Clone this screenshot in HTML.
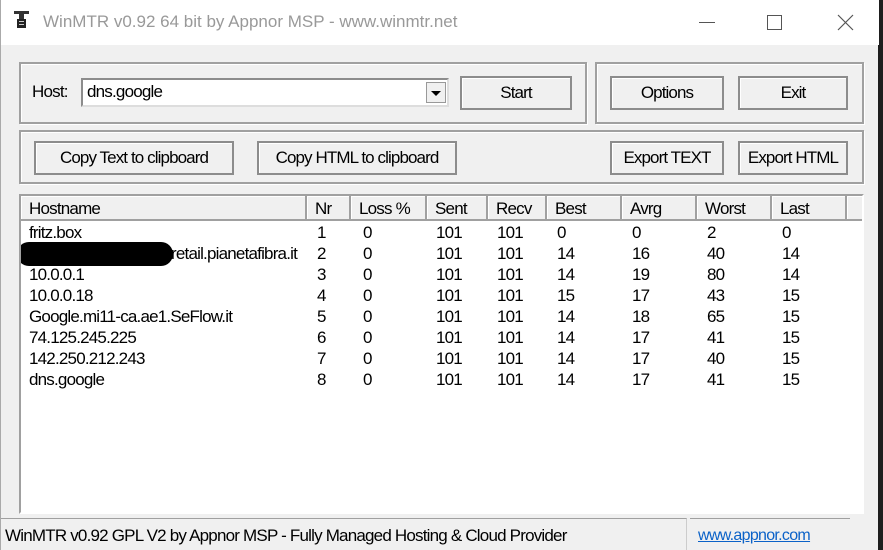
<!DOCTYPE html>
<html><head><meta charset="utf-8"><style>
*{margin:0;padding:0;box-sizing:border-box}
body{width:883px;height:550px;background:#1e1e1e;position:relative;overflow:hidden;font-family:"Liberation Sans",sans-serif;font-size:17px;color:#000}
.win{position:absolute;left:0;top:0;width:878px;height:550px;background:#f0f0f0;border-left:1px solid #aaa}
.title{position:absolute;left:0;top:0;width:878px;height:45px;background:#fff}
.title span{position:absolute;left:42px;top:12px;font-size:17px;color:#999}
.a{position:absolute}
.grp{position:absolute;border:2px solid #a0a0a0;box-shadow:inset 1px 1px 0 #fff,1px 1px 0 #fff}
.btn{position:absolute;border:2px solid #8c8c8c;background:#f0f0f0;text-align:center;font-size:17px;letter-spacing:-0.9px;box-shadow:inset 1px 1px 0 #fff}
.list{position:absolute;left:18px;top:194px;width:845px;height:320px;background:#fff;border:2px solid #a0a0a0;border-right-color:#fff;border-bottom-color:#fff;overflow:hidden}
.hd{position:absolute;top:0;height:25px;background:#f0f0f0;border-right:2px solid #a0a0a0;border-bottom:2px solid #a0a0a0;box-shadow:inset 1px 1px 0 #fff;padding-left:8px;line-height:25px;letter-spacing:-0.8px}
.c{position:absolute;letter-spacing:-0.8px;line-height:21px}
</style></head><body>
<div class="win">
<div class="title">
<svg class="a" style="left:13px;top:11px" width="16" height="18" viewBox="0 0 16 18"><rect x="0" y="0" width="15" height="3" fill="#333"/><rect x="5" y="3" width="5" height="5" fill="#333"/><rect x="3" y="8" width="9" height="9" fill="#222"/><rect x="5" y="10" width="5" height="1" fill="#ccc"/><rect x="5" y="13" width="5" height="1" fill="#ccc"/></svg>
<span>WinMTR v0.92 64 bit by Appnor MSP - www.winmtr.net</span>
<div class="a" style="left:698px;top:22px;width:16px;height:1px;background:#555"></div>
<div class="a" style="left:766px;top:15px;width:15px;height:15px;border:1px solid #555"></div>
<svg class="a" style="left:836px;top:14px" width="17" height="17"><path d="M1 1L16 16M16 1L1 16" stroke="#555" stroke-width="1.2"/></svg>
</div>

<div class="grp" style="left:18px;top:62px;width:568px;height:62px"></div>
<div class="grp" style="left:594px;top:62px;width:269px;height:62px"></div>
<div class="grp" style="left:18px;top:130px;width:845px;height:54px"></div>

<div class="a" style="left:31px;top:82px;letter-spacing:-0.8px">Host:</div>
<div class="a" style="left:80px;top:78px;width:368px;height:29px;background:#fff;border:2px solid #8c8c8c;border-right-color:#ddd;border-bottom-color:#ddd"><span class="a" style="left:4px;top:2px;letter-spacing:-0.8px">dns.google</span>
<div class="a" style="left:343px;top:2px;width:20px;height:21px;background:#f0f0f0;border:1px solid #999"><svg class="a" style="left:4px;top:8px" width="10" height="6"><path d="M0 0H10L5 5Z" fill="#000"/></svg></div></div>
<div class="btn" style="left:459px;top:76px;width:112px;height:34px;line-height:30px">Start</div>
<div class="btn" style="left:609px;top:76px;width:114px;height:34px;line-height:30px">Options</div>
<div class="btn" style="left:737px;top:76px;width:110px;height:34px;line-height:30px">Exit</div>

<div class="btn" style="left:33px;top:141px;width:200px;height:34px;line-height:30px">Copy Text to clipboard</div>
<div class="btn" style="left:256px;top:141px;width:200px;height:34px;line-height:30px">Copy HTML to clipboard</div>
<div class="btn" style="left:609px;top:141px;width:114px;height:34px;line-height:30px">Export TEXT</div>
<div class="btn" style="left:737px;top:141px;width:110px;height:34px;line-height:30px">Export HTML</div>

<div class="list">
<div class="hd" style="left:0;width:286px">Hostname</div>
<div class="hd" style="left:286px;width:44px">Nr</div>
<div class="hd" style="left:330px;width:76px">Loss %</div>
<div class="hd" style="left:406px;width:61px">Sent</div>
<div class="hd" style="left:467px;width:59px">Recv</div>
<div class="hd" style="left:526px;width:75px">Best</div>
<div class="hd" style="left:601px;width:75px">Avrg</div>
<div class="hd" style="left:676px;width:75px">Worst</div>
<div class="hd" style="left:751px;width:75px">Last</div>
<div class="hd" style="left:826px;width:30px"></div>
<div class="c" style="left:8px;top:26px">fritz.box<br><span style="display:inline-block;width:142px"></span>retail.pianetafibra.it<br>10.0.0.1<br>10.0.0.18<br>Google.mi11-ca.ae1.SeFlow.it<br>74.125.245.225<br>142.250.212.243<br>dns.google</div>
<div class="a" style="left:-4px;top:46px;width:156px;height:24px;background:#000;border-radius:12px"></div>
<div class="c" style="left:296px;top:26px">1<br>2<br>3<br>4<br>5<br>6<br>7<br>8</div>
<div class="c" style="left:342px;top:26px">0<br>0<br>0<br>0<br>0<br>0<br>0<br>0</div>
<div class="c" style="left:415px;top:26px">101<br>101<br>101<br>101<br>101<br>101<br>101<br>101</div>
<div class="c" style="left:476px;top:26px">101<br>101<br>101<br>101<br>101<br>101<br>101<br>101</div>
<div class="c" style="left:536px;top:26px">0<br>14<br>14<br>15<br>14<br>14<br>14<br>14</div>
<div class="c" style="left:611px;top:26px">0<br>16<br>19<br>17<br>18<br>17<br>17<br>17</div>
<div class="c" style="left:686px;top:26px">2<br>40<br>80<br>43<br>65<br>41<br>40<br>41</div>
<div class="c" style="left:761px;top:26px">0<br>14<br>14<br>15<br>15<br>15<br>15<br>15</div>
</div>

<div class="a" style="left:0;top:518px;width:686px;height:32px;border-top:1px solid #a0a0a0;border-right:1px solid #ccc"></div>
<div class="a" style="left:4px;top:526px;letter-spacing:-0.8px">WinMTR v0.92 GPL V2 by Appnor MSP - Fully Managed Hosting &amp; Cloud Provider</div>
<div class="a" style="left:689px;top:518px;width:160px;height:32px;border-top:1px solid #a0a0a0"></div>
<div class="a" style="left:697px;top:527px;color:#0b62c8;text-decoration:underline;font-size:16px;letter-spacing:-0.7px">www.appnor.com</div>
</div>
</body></html>
